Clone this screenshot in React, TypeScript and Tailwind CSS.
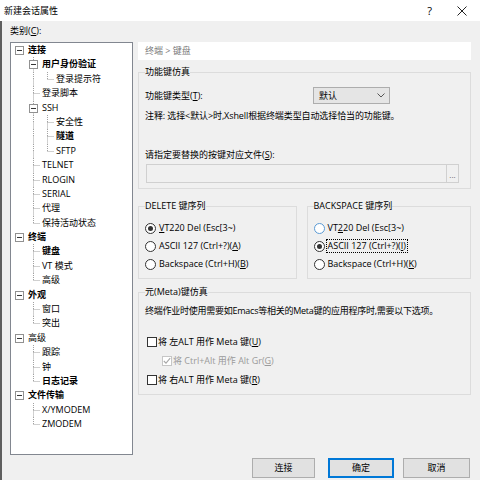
import React from "react";

type Node = { t: string; d: number; b?: boolean; exp?: boolean };

const tree: Node[] = [
  { t: "连接", d: 0, b: true, exp: true },
  { t: "用户身份验证", d: 1, b: true, exp: true },
  { t: "登录提示符", d: 2 },
  { t: "登录脚本", d: 1 },
  { t: "SSH", d: 1, exp: true },
  { t: "安全性", d: 2 },
  { t: "隧道", d: 2, b: true },
  { t: "SFTP", d: 2 },
  { t: "TELNET", d: 1 },
  { t: "RLOGIN", d: 1 },
  { t: "SERIAL", d: 1 },
  { t: "代理", d: 1 },
  { t: "保持活动状态", d: 1 },
  { t: "终端", d: 0, b: true, exp: true },
  { t: "键盘", d: 1, b: true },
  { t: "VT 模式", d: 1 },
  { t: "高级", d: 1 },
  { t: "外观", d: 0, b: true, exp: true },
  { t: "窗口", d: 1 },
  { t: "突出", d: 1 },
  { t: "高级", d: 0, exp: true },
  { t: "跟踪", d: 1 },
  { t: "钟", d: 1 },
  { t: "日志记录", d: 1, b: true },
  { t: "文件传输", d: 0, b: true, exp: true },
  { t: "X/YMODEM", d: 1 },
  { t: "ZMODEM", d: 1 },
];

function hasNext(i: number): boolean {
  const d = tree[i].d;
  for (let j = i + 1; j < tree.length; j++) {
    if (tree[j].d < d) return false;
    if (tree[j].d === d) return true;
  }
  return false;
}

function ancestorHasNext(i: number, k: number): boolean {
  for (let j = i - 1; j >= 0; j--) {
    if (tree[j].d === k) return hasNext(j);
    if (tree[j].d < k) return false;
  }
  return false;
}

const LINE = "#a0a0a0";

function Cell({ up, down, right, box }: { up?: boolean; down?: boolean; right?: boolean; box?: boolean }) {
  return (
    <svg width="14" height="14.4" viewBox="0 0 14 14.4" className="shrink-0 block">
      {up && <line x1="7.5" y1="0" x2="7.5" y2="7.5" stroke={LINE} strokeWidth="1" strokeDasharray="1 1" />}
      {down && <line x1="7.5" y1="7.5" x2="7.5" y2="14.4" stroke={LINE} strokeWidth="1" strokeDasharray="1 1" />}
      {right && <line x1="7.5" y1="7.5" x2="14" y2="7.5" stroke={LINE} strokeWidth="1" strokeDasharray="1 1" />}
      {box && (
        <g>
          <rect x="3.5" y="3.5" width="8" height="8" fill="#fff" stroke="#919191" strokeWidth="1" />
          <line x1="5" y1="7.5" x2="10" y2="7.5" stroke="#333" strokeWidth="1" />
        </g>
      )}
    </svg>
  );
}

function TreeRow({ i }: { i: number }) {
  const n = tree[i];
  const cells: React.ReactNode[] = [];
  for (let k = 0; k < n.d; k++) {
    const v = k >= 1 && ancestorHasNext(i, k);
    cells.push(<Cell key={k} up={v} down={v} />);
  }
  if (n.d === 0) {
    cells.push(<Cell key="c" box={n.exp} />);
  } else {
    cells.push(<Cell key="c" up down={hasNext(i)} right={!n.exp} box={n.exp} />);
  }
  return (
    <div className="flex items-center h-[14.4px]">
      {cells}
      <span className={"pl-[2px] whitespace-nowrap leading-[14.4px] " + (n.b ? "font-bold" : "")}>{n.t}</span>
    </div>
  );
}

function U({ c }: { c: string }) {
  return <span className="underline underline-offset-[1px]">{c}</span>;
}

function Radio({ checked, hover, focus, children }: { checked?: boolean; hover?: boolean; focus?: boolean; children: React.ReactNode }) {
  return (
    <div className="flex items-center h-[18px]">
      <span
        className={
          "w-[11px] h-[11px] rounded-full border bg-white flex items-center justify-center shrink-0 " +
          (hover ? "border-[#5b9bd5]" : "border-[#333333]")
        }
      >
        {checked && <span className="w-[5px] h-[5px] rounded-full bg-[#333333]" />}
      </span>
      <span
        className={
          "ml-[1px] whitespace-nowrap px-[1px] leading-[12px] border " +
          (focus ? "border-dotted border-black" : "border-transparent")
        }
      >
        {children}
      </span>
    </div>
  );
}

function Check({ checked, disabled, children }: { checked?: boolean; disabled?: boolean; children: React.ReactNode }) {
  return (
    <div className="flex items-center h-[19px]">
      <span
        className={
          "w-[10px] h-[10px] border bg-white flex items-center justify-center shrink-0 " +
          (disabled ? "border-[#c6c6c6]" : "border-[#333333]")
        }
      >
        {checked && (
          <svg width="8" height="8" viewBox="0 0 8 8">
            <path d="M0.8 4 L3 6.2 L7.2 1.2" fill="none" stroke={disabled ? "#a8a8a8" : "#333"} strokeWidth="1.1" />
          </svg>
        )}
      </span>
      <span className={"ml-[1px] whitespace-nowrap " + (disabled ? "text-[#9a9a9a]" : "")}>{children}</span>
    </div>
  );
}

export default function App() {
  return (
    <div className="w-[480px] h-[480px] bg-[#f0f0f0] flex flex-col overflow-hidden text-[9px] leading-[14px] text-black font-['Open_Sans','Noto_Sans_CJK_SC',sans-serif]">
      {/* title bar */}
      <div className="h-[21px] bg-white flex items-center pl-[4px] shrink-0">
        <span className="flex-1">新建会话属性</span>
        <span className="text-[11px] mr-[25px]">?</span>
        <svg width="10" height="10" viewBox="0 0 10 10" className="mr-[13px]">
          <path d="M0.5 0.5 L9.5 9.5 M9.5 0.5 L0.5 9.5" stroke="#222" strokeWidth="1" />
        </svg>
      </div>

      <div className="flex-1 flex flex-col border-l-2 border-[#5f5f5f]">
        <div className="flex-1 flex pl-[8px] pb-[3px]">
          {/* left column */}
          <div className="w-[123px] flex flex-col pt-[3px] shrink-0">
            <div className="h-[14px] whitespace-nowrap">
              类别(<U c="C" />):
            </div>
            <div className="mt-[4px] h-[413px] bg-white border border-[#828790] pl-[1px] overflow-hidden">
              {tree.map((_, i) => (
                <TreeRow key={i} i={i} />
              ))}
            </div>
          </div>

          {/* right column */}
          <div className="w-[333px] ml-[5px] flex flex-col pt-[21px] shrink-0">
            <div className="h-[18px] bg-white text-[#7a7a7a] pl-[7px] flex items-center">终端 &gt; 键盘</div>

            <fieldset className="mt-[5px] border border-[#dcdcdc] px-[6px] pb-[5px]">
              <legend className="px-0">功能键仿真</legend>
              <div className="mt-[8px] flex items-center h-[17px]">
                <span className="w-[168px] whitespace-nowrap">
                  功能键类型(<U c="T" />):
                </span>
                <div className="w-[77px] h-[17px] border border-[#adadad] bg-[#e5e5e5] flex items-center justify-between pl-[5px] pr-[4px]">
                  <span>默认</span>
                  <svg width="8" height="5" viewBox="0 0 8 5">
                    <path d="M0.5 0.5 L4 4 L7.5 0.5" fill="none" stroke="#555" strokeWidth="1" />
                  </svg>
                </div>
              </div>
              <div className="mt-[5px] whitespace-nowrap tracking-[-0.1px]">注释: 选择&lt;默认&gt;时,Xshell根据终端类型自动选择恰当的功能键。</div>
              <div className="mt-[25px] whitespace-nowrap">
                请指定要替换的按键对应文件(<U c="S" />):
              </div>
              <div className="mt-[2px] ml-[1px] w-[313px] h-[19px] border border-[#d0d0d0] bg-[#f0f0f0] flex justify-end">
                <div className="w-[12px] h-full border-l border-[#d0d0d0] flex items-end justify-center pb-[3px] text-[8px] leading-[8px] text-[#666]">
                  ...
                </div>
              </div>
            </fieldset>

            <div className="mt-[10px] flex gap-[10px]">
              <fieldset className="w-[159px] border border-[#dcdcdc] px-[6px] pb-[5px]">
                <legend className="px-0">DELETE 键序列</legend>
                <div className="mt-[6px]">
                  <Radio checked>
                    <U c="V" />T220 Del (Esc[3~)
                  </Radio>
                  <Radio>
                    ASCII 127 (Ctrl+?)(<U c="A" />)
                  </Radio>
                  <Radio>
                    Backspace (Ctrl+H)(<U c="B" />)
                  </Radio>
                </div>
              </fieldset>
              <fieldset className="w-[165px] border border-[#dcdcdc] px-[6px] pb-[5px]">
                <legend className="px-0">BACKSPACE 键序列</legend>
                <div className="mt-[6px]">
                  <Radio hover>
                    VT<U c="2" />20 Del (Esc[3~)
                  </Radio>
                  <Radio checked focus>
                    ASCII 127 (Ctrl+?)(<U c="I" />)
                  </Radio>
                  <Radio>
                    Backspace (Ctrl+H)(<U c="K" />)
                  </Radio>
                </div>
              </fieldset>
            </div>

            <fieldset className="mt-[6px] border border-[#dcdcdc] px-[6px] pb-[5px]">
              <legend className="px-0">元(Meta)键仿真</legend>
              <div className="mt-[5px] whitespace-nowrap tracking-[-0.25px]">终端作业时使用需要如Emacs等相关的Meta键的应用程序时,需要以下选项。</div>
              <div className="mt-[14px] ml-[2px]">
                <Check>
                  将 左ALT 用作 Meta 键(<U c="U" />)
                </Check>
                <div className="pl-[15px]">
                  <Check checked disabled>
                    将 Ctrl+Alt 用作 Alt Gr(<U c="G" />)
                  </Check>
                </div>
                <Check>
                  将 右ALT 用作 Meta 键(<U c="R" />)
                </Check>
              </div>
            </fieldset>
          </div>
        </div>

        {/* footer */}
        <div className="h-[20px] flex justify-end pr-[10px] mb-[2px] shrink-0">
          <button className="w-[63px] h-[20px] bg-[#e1e1e1] border border-[#adadad] flex items-center justify-center">连接</button>
          <button className="ml-[13px] w-[66px] h-[20px] bg-[#e1e1e1] border-2 border-[#0078d7] flex items-center justify-center">确定</button>
          <button className="ml-[9px] w-[67px] h-[20px] bg-[#e1e1e1] border border-[#adadad] flex items-center justify-center">取消</button>
        </div>
      </div>
    </div>
  );
}
